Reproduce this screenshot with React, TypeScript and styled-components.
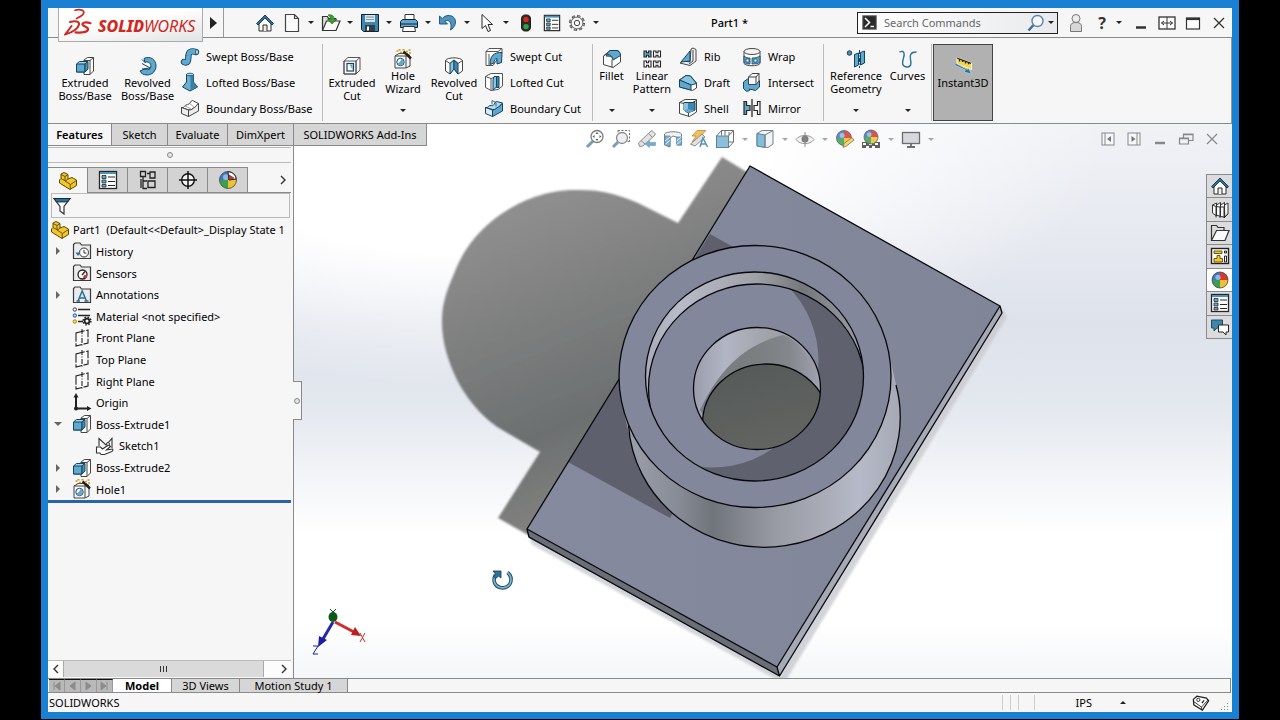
import React from "react";
import styled, { createGlobalStyle, css } from "styled-components";

const INK = "#262626";
const BLUE = "#5fa9d0";
const DEEP = "#2a7099";
const PANEL = "#f6f6f7";
const LINE = "#8a8a8a";

const GlobalStyle = createGlobalStyle`
  * { box-sizing: border-box; }
  body {
    margin: 0;
    background: #000;
    color: #000;
    font-family: "Noto Sans", "Open Sans", sans-serif;
    font-size: 11px;
    line-height: 13px;
  }
  button, input, select {
    font: inherit;
    color: inherit;
    border: 0;
    padding: 0;
    margin: 0;
    background: none;
  }
  ul { list-style: none; margin: 0; padding: 0; }
  svg { display: block; flex: none; }
`;

/* ---------- icons ---------- */

const ball = (cx: number, cy: number, r: number) => (
  <g>
    <path d={`M${cx} ${cy}L${cx - r} ${cy}A${r} ${r} 0 0 1 ${cx} ${cy - r}Z`} fill="#3a78c8" />
    <path d={`M${cx} ${cy}L${cx} ${cy - r}A${r} ${r} 0 0 1 ${cx + r} ${cy}Z`} fill="#d8372c" />
    <path d={`M${cx} ${cy}L${cx + r} ${cy}A${r} ${r} 0 0 1 ${cx} ${cy + r}Z`} fill="#f0c030" />
    <path d={`M${cx} ${cy}L${cx} ${cy + r}A${r} ${r} 0 0 1 ${cx - r} ${cy}Z`} fill="#3aa050" />
    <circle cx={cx - r / 4} cy={cy - r / 3} r={r / 3} fill="#fff" opacity=".45" />
    <circle cx={cx} cy={cy} r={r} fill="none" stroke="#444" strokeWidth=".8" />
  </g>
);

const wand = (
  <g>
    <path d="M10.500 2.500l7.500 7" stroke="#222" strokeWidth="2.400" />
    <path d="M3.500 2h2M7 3.500h2M5.500 .8h2M13 2.500h2M15.500 1h2M16 4h2M9.500 .8h2" stroke="#d99a1c" strokeWidth="1.400" />
  </g>
);

const folder = (
  <path d="M1.500 17.500V3.500l1.500-1.500h5l1.500 2h9v13.500z" fill="#e9ebec" stroke="#3a3a3a" strokeWidth="1.200" />
);

const icons: Record<string, React.ReactNode> = {
  home: (
    <>
      <path d="M4 10v8h12v-8L10 4z" fill="#fff" stroke={INK} />
      <path d="M8 18v-6h4v6" fill="#eee" stroke={INK} />
      <path d="M1.500 10.500L10 2l8.500 8.500-1.500 1.500-7-7-7 7z" fill={DEEP} stroke="#123" strokeWidth=".8" />
    </>
  ),
  page: <path d="M3.500 1.500h9l4 4v13h-13zM12.500 1.500v4h4" fill="#fbfbfb" stroke="#444" strokeWidth="1.200" />,
  open: (
    <>
      <path d="M1.500 17V3.500h5l1 2h7V8" fill="#ddd" stroke="#333" strokeWidth="1.200" />
      <path d="M1.500 17.500L5.500 8H19l-4 9.500z" fill="#fafafa" stroke="#333" strokeWidth="1.200" />
      <path d="M7 2c4-1 6 1 6 4h3l-5 5-4.500-5H9.500c0-2-1-3-2.500-4z" fill="#3f9b2f" stroke="#1f6a18" strokeWidth=".6" />
    </>
  ),
  save: (
    <>
      <path d="M1.500 1.500h17v17h-15l-2-2z" fill="#3f86ad" stroke="#123" />
      <path d="M5 2h10v7H5z" fill="#dbe4ea" />
      <path d="M6 4h8M6 6.500h8" stroke="#7893a5" strokeWidth=".9" />
      <path d="M5 12h10v6H5z" fill="#333f48" />
      <path d="M7 13.500h2v4H7z" fill="#fff" />
    </>
  ),
  print: (
    <>
      <path d="M6 7V1.500h9V7" fill="#fff" stroke="#333" />
      <path d="M1.500 8.500l2-2h13l2 2v6h-17z" fill={BLUE} stroke="#123" />
      <path d="M1.500 11h17" stroke="#123" />
      <path d="M4.500 13.500h11l1 5h-13z" fill="#fff" stroke="#333" />
    </>
  ),
  undo: (
    <path d="M1.500 3v8h8L6.800 8.200c4-2 7.700.5 5.700 8.800 8-5 6-15-2.500-14.500C7.500 2.700 5.500 4 4.300 5.500z" fill="#4f94be" stroke="#1a4f70" strokeWidth=".9" />
  ),
  cursor: <path d="M5 1.500v14l3.500-3 2.500 6 2.500-1-2.500-6h4.500z" fill="#fff" stroke={INK} />,
  light: (
    <>
      <rect x="5" y="1" width="10" height="18" rx="4.500" fill="#2b2b2b" stroke="#111" />
      <circle cx="10" cy="6" r="3" fill="#d6291e" />
      <circle cx="10" cy="14" r="3" fill="#2fa53a" />
    </>
  ),
  list: (
    <>
      <rect x="1.500" y="1.500" width="17" height="17" fill="#fff" stroke={INK} strokeWidth="1.300" />
      <path d="M2 3h16" stroke="#4a93bb" strokeWidth="2" />
      <path d="M4 5.500h4v3H4zM4 10h4v3H4zM4 14.500h4v2.500H4z" fill={BLUE} stroke={INK} strokeWidth=".8" />
      <path d="M10 7h7M10 11.500h7M10 15.500h7" stroke={INK} />
    </>
  ),
  gear: (
    <>
      <circle cx="10" cy="10" r="7.800" fill="none" stroke="#444" strokeWidth="2.200" strokeDasharray="3.500 2.626" />
      <circle cx="10" cy="10" r="7.600" fill="none" stroke="#f6f6f7" strokeWidth="1" strokeDasharray="1.700 4.268" strokeDashoffset="-.9" />
      <circle cx="10" cy="10" r="6.600" fill="#f6f6f7" stroke="#444" strokeWidth=".9" />
      <circle cx="10" cy="10" r="3" fill="#fff" stroke="#444" strokeWidth="1.100" />
    </>
  ),
  user: (
    <>
      <path d="M4.500 18.500v-5c0-3 2-4 5.500-4s5.500 1 5.500 4v5z" fill="#d8d8d8" stroke="#777" />
      <circle cx="10" cy="5.500" r="4" fill="#ececec" stroke="#777" />
    </>
  ),
  minimize: <path d="M5 14.500h10" stroke="#333" strokeWidth="2.500" />,
  span: (
    <>
      <rect x="2" y="4" width="16" height="12" fill="#fff" stroke="#333" strokeWidth="1.300" />
      <path d="M10 4v12M4.500 10h11M7 8l-2.500 2L7 12M13 8l2.500 2L13 12" fill="none" stroke="#333" />
    </>
  ),
  maximize: (
    <>
      <rect x="3.500" y="5" width="13" height="11" fill="#fff" stroke="#333" strokeWidth="1.200" />
      <path d="M3.500 6h13" stroke="#333" strokeWidth="2.200" />
    </>
  ),
  close: <path d="M5 5l10 10M15 5L5 15" stroke="#333" strokeWidth="1.300" />,
  boss: (
    <>
      <path d="M9 4l3.500-2.500h6V15L15 18.500H9z" fill="#fff" stroke="#444" />
      <path d="M15 4.500v14M15 4.500l3.500-3M15 4.500H9" fill="none" stroke="#444" />
      <path d="M1.500 8l3-2.500H13L10 8v8H1.500z" fill="#a3d0e8" stroke="#14455f" />
      <path d="M10 8h-8.500v8H10z" fill={BLUE} stroke="#14455f" />
      <path d="M10 8l3-2.500V13l-3 3z" fill="#468fb8" stroke="#14455f" />
    </>
  ),
  revolve: (
    <>
      <path d="M6 2.500c6-3 12 1 12 7.500 0 5-4 9-9 9-3 0-6-1.500-7-4l5-2c4 2 7-1 5.500-4.500C11.500 5.500 8 5.500 7 6.500z" fill={BLUE} stroke="#14455f" />
      <path d="M4 7.500l8 4.500-8 1M7 6.500L4 3.500" fill="none" stroke="#14455f" />
    </>
  ),
  swept: (
    <>
      <path d="M4 15C9 17 8 12 8.500 8.500 9 3.500 13 4 16 5" fill="none" stroke="#14455f" strokeWidth="6.400" strokeLinecap="round" />
      <path d="M4 15C9 17 8 12 8.500 8.500 9 3.500 13 4 16 5" fill="none" stroke={BLUE} strokeWidth="4.600" strokeLinecap="round" />
      <ellipse cx="17" cy="5" rx="1.500" ry="2.500" fill="#b5dbef" stroke="#14455f" strokeWidth=".8" />
    </>
  ),
  lofted: (
    <>
      <path d="M6.500 2.500h7V10l4 5-7.500 4-7.500-4 4-5z" fill="#6aaed2" stroke="#14455f" />
      <path d="M10.500 4v14.500l7-3.500-4-5V3z" fill="#3a7fa6" />
      <ellipse cx="10" cy="2.500" rx="3.500" ry="1.300" fill="#a8d4ea" stroke="#14455f" strokeWidth=".8" />
    </>
  ),
  boundary: (
    <>
      <path d="M1.500 9.500c3 1 3-3 6-3s3-4 5-4l6 3c-2 1-2 3-4 4s-3 3-6 2.500z" fill="#fff" stroke="#444" />
      <path d="M1.500 9.500v6l7 3v-6.500zM8.500 12v6.500l10-5.500V5.500c-2 1-2 3-4 4s-3 3-6 2.500z" fill="#eceded" stroke="#444" />
      <path d="M5 8l6 3M9 5l5 4" stroke="#777" strokeWidth=".7" />
    </>
  ),
  cutExtrude: (
    <>
      <path d="M2 5l4-3.500h12V14l-4 4H2z" fill="#fff" stroke="#555" />
      <path d="M14 5H2v13h12zM14 5l4-3.500M14 18V5" fill="none" stroke="#555" />
      <rect x="5" y="7.500" width="6.500" height="7.500" fill="#fff" stroke="#14455f" strokeWidth="1.200" />
      <path d="M7.500 8.500h3.200v5.500z" fill={BLUE} />
    </>
  ),
  hole: (
    <>
      <path d="M2 7l4-2.500h8l3 2.500V17l-4 2H2z" fill="#f7f7f7" stroke="#444" />
      <path d="M2 7h11v12M13 7l4-1" fill="none" stroke="#444" />
      <circle cx="7.500" cy="13" r="3.700" fill="#fff" stroke="#14455f" />
      <path d="M4.500 14.500c2-1 3-2 4-4.500 3 1.500 2.500 5-.5 6.500-2 .3-3-.7-3.500-2z" fill={BLUE} />
      {wand}
    </>
  ),
  cutRevolve: (
    <>
      <path d="M1.500 4.500C3 1 17 1 18.500 4.500V15L14 18l-4-5.500L6 18l-4.500-3z" fill="#fff" stroke="#444" />
      <path d="M1.500 4.500L6 7.500l4-3.500 4 3.500 4.500-3" fill="none" stroke="#444" />
      <path d="M10 4v9l-4 5V7.500z" fill="#8cc3e0" stroke="#14455f" />
      <path d="M10 4v9l4 5V7.500z" fill="#3f87b0" stroke="#14455f" />
    </>
  ),
  cutSwept: (
    <>
      <path d="M2 4.500l3-3h13v4L9 18.500H2z" fill="#fff" stroke="#555" />
      <path d="M2 4.500h12l4-3M5 18V7" fill="none" stroke="#555" />
      <path d="M18 5.500C10 5 6 9 6 17.500l4-1.500c0-3 1-4 3-4.500V17l4.500-1.500z" fill={BLUE} stroke="#14455f" />
    </>
  ),
  cutLofted: (
    <>
      <path d="M1.500 4.500L7 1.500h11.500V14L14 17.500 7 18.500l-5.500-3z" fill="#fff" stroke="#555" />
      <path d="M1.500 4.500L7 6.500v12M7 6.500l3-1" fill="none" stroke="#555" />
      <path d="M10 4.500h2.500V15L9 18V8z" fill="#8cc3e0" stroke="#14455f" />
      <path d="M12.500 4.500H15v11h-2.500z" fill="#3f87b0" stroke="#14455f" />
    </>
  ),
  cutBoundary: (
    <>
      <path d="M1.500 9.500c3 1 3-3 6-2s3-4 5-4l6 1.500c-2 1-2 3-4 4s-3 3-6 2.500z" fill="#b5dbef" stroke="#14455f" />
      <path d="M1.500 9.500v6l7 3v-6.500z" fill="#dcebf3" stroke="#14455f" />
      <path d="M8.500 12v6.500l10-5.500V5.500c-2 1-2 3-4 3.500s-3 3-6 3z" fill={BLUE} stroke="#14455f" />
      <path d="M8 6.500V2.500l4 2v4" fill="none" stroke="#14455f" strokeWidth=".8" />
    </>
  ),
  fillet: (
    <>
      <path d="M1.500 7L8 1.500h8l2.500 4V13L11 18.500l-9.500-3z" fill="#fff" stroke="#444" />
      <path d="M10 10.500v8" stroke="#444" />
      <path d="M5.500 4L8 1.500h6c3 0 4.500 2 4.500 5L11 11c0-2-1-4-7-4z" fill={BLUE} stroke="#14455f" />
      <path d="M1.500 7l2.500-2c5 .5 6.500 2.500 6.500 5.500" fill="none" stroke="#444" />
    </>
  ),
  pattern: (
    <>
      <path d="M2 2h2.500v1.800h2V2H9v6H6.500V6.200h-2V8H2z" fill={BLUE} stroke={INK} strokeWidth="1.100" />
      <path d="M11.500 2H14v1.800h2V2h2.500v6H16V6.200h-2V8h-2.500zM2 12h2.500v1.800h2V12H9v6H6.500v-1.800h-2V18H2zM11.500 12H14v1.800h2V12h2.500v6H16v-1.800h-2V18h-2.500z" fill="#fff" stroke={INK} strokeWidth="1.100" />
    </>
  ),
  rib: (
    <>
      <path d="M13 2l2-1 3 1.500V14l-6 4.500L2 16l3-2 7 1z" fill="#f4f4f4" stroke="#444" />
      <path d="M15 3v11l-4 3" fill="none" stroke="#444" />
      <path d="M12 4v10l-9 1z" fill={BLUE} stroke="#14455f" />
    </>
  ),
  draft: (
    <>
      <path d="M1.500 8L8 3.500l4.500.5 6 7V16l-4 2.500L1.500 15z" fill="#fff" stroke="#444" />
      <path d="M1.500 8L8 3.500l4.500.5 6 7.500L13 13z" fill="#8cc3e0" stroke="#14455f" />
      <path d="M1.500 8L13 13v5L1.500 15z" fill={BLUE} stroke="#14455f" />
    </>
  ),
  shell: (
    <>
      <path d="M1.500 4.500L7 1.500h11.500V14l-7 4.500-10-3z" fill="#fff" stroke="#444" />
      <path d="M1.500 4.500l9 2v12M10.500 6.500l8-4" fill="none" stroke="#444" />
      <path d="M6 4.500h11V12l-7 3-4-3z" fill="#3f87b0" stroke="#14455f" />
      <path d="M10 5v6l-4 2V5z" fill="#8cc3e0" />
      <path d="M10 11l6 1.500-5 2.500-5-2z" fill={BLUE} />
    </>
  ),
  wrap: (
    <>
      <path d="M2 4.500v12c2 3 14 3 16 0v-12" fill="#fff" stroke="#444" />
      <ellipse cx="10" cy="4.500" rx="8" ry="3" fill="#f4f4f4" stroke="#444" />
      <path d="M2 9c2 1.500 3.500 2 6 2v6c-3 0-4-.5-6-1.500zM10 11c4 0 6-1 8-2v6.500c-2 1-4 1.500-8 1.500z" fill={BLUE} stroke="#14455f" strokeWidth=".8" />
      <path d="M4 12v3h3v-3zM12 12v3h3v-3z" fill="#fff" stroke="#14455f" strokeWidth=".8" />
    </>
  ),
  intersect: (
    <>
      <path d="M1.500 10l4-3h10l2 2V15l-4 3.500-6-1.500v1.500l-3 1-3-3z" fill={BLUE} stroke="#14455f" />
      <path d="M6.500 5l3.500-3.500h7V9L14 12.500H6.500z" fill="#f7f7f7" stroke="#444" />
      <path d="M6.500 5H14v7.500M14 5l3-3.500" fill="none" stroke="#444" />
    </>
  ),
  mirror: (
    <>
      <path d="M2 3.500h2.500v4H8v5H4.500v4H2z" fill={BLUE} stroke={INK} strokeWidth="1.200" />
      <path d="M18 3.500h-2.500v4H12v5h3.500v4H18z" fill="#fff" stroke={INK} strokeWidth="1.200" />
      <path d="M10 1v18" stroke={INK} strokeWidth="1.300" />
    </>
  ),
  refGeo: (
    <>
      <circle cx="3.500" cy="4" r="2.300" fill="#468fb8" stroke="#123" strokeWidth=".8" />
      <path d="M8.500 5.500l4-1.500v12l-4 2zM14.500 3.500l4-1.500v12l-4 2z" fill={BLUE} stroke="#14455f" />
      <path d="M13.500 1v18" stroke="#14455f" strokeDasharray="4 1.500 1 1.500" />
    </>
  ),
  curves: (
    <path d="M1.500 3C6 1 7 4 5.500 9S4 17.500 8.500 18s5-3 4-7.500S12.500 3 18.500 3" fill="none" stroke={DEEP} strokeWidth="1.400" />
  ),
  instant: (
    <>
      <path d="M4 1.500L18.500 7v6.500L4 8z" fill="#f6d64a" stroke="#fff8c8" />
      <path d="M4 2l14 5.300M6.500 3v2.500M9.500 4v2M12.500 5v2.500M15.500 6.300v2" stroke={INK} strokeWidth="1.300" />
      <path d="M1.500 9l11 5-1.500 2 7.500 2-3-5.500-1.200 1L3 7.500z" fill={DEEP} stroke="#bfe0f2" strokeWidth=".6" />
    </>
  ),
  zoomFit: (
    <>
      <path d="M2 18l6-6" stroke="#5a8fb0" strokeWidth="3" />
      <circle cx="12" cy="7.500" r="6" fill="#fff" stroke="#666" strokeWidth="1.300" />
      <path d="M12 3l1.500 2h-3zM12 12l1.500-2h-3zM7.500 7.500l2-1.500v3zM16.500 7.500l-2-1.500v3z" fill="#444" />
    </>
  ),
  zoomArea: (
    <>
      <path d="M7 1.500h11.500v11M18.500 12.500h-3M7 1.500v3" fill="none" stroke="#555" strokeDasharray="2 1.500" />
      <path d="M2 18l5-5" stroke="#5a8fb0" strokeWidth="3" />
      <circle cx="11" cy="9" r="5.500" fill="#e9eef2" stroke="#777" strokeWidth="1.300" />
    </>
  ),
  prevView: (
    <>
      <path d="M1.500 14L13 3l2-1.500 3.500 3.500L17 7 6 17l-3.500.5z" fill="#ddd" stroke="#777" />
      <path d="M4 11.500L8 15M11.500 4.500l4 4" stroke="#777" />
      <path d="M18.500 13.500h-6v-2l-4.500 3.500 4.500 3.500v-2h6z" fill="#5aa0c4" stroke="#5b8aa3" strokeWidth=".6" />
    </>
  ),
  section: (
    <>
      <path d="M1.500 5c2-3 15-3 17 0v11h-4V8.500L10 7 7 9v9l-5.500-2z" fill="#f2f2f2" stroke="#666" />
      <path d="M2 7h5v10.500L2 15.500zM13.500 8h5v8h-5z" fill={BLUE} stroke="#3d7391" strokeWidth=".8" />
      <path d="M2 12l5-4M2 15.500l5-4M13.500 12l5-4M13.500 15.500l5-4" stroke="#fff" strokeWidth=".8" />
    </>
  ),
  annView: (
    <>
      <path d="M8 1.500h9l-5 5h3L3 13l4-6H3z" fill="#f2b63c" stroke="#a87a20" strokeWidth=".8" />
      <path d="M1.500 15L13 5l3 3L6 17z" fill="#ddd" stroke="#777" />
      <path d="M11 18l3-9 4.500 9M12 15h5" fill="none" stroke="#3a7fa8" strokeWidth="1.500" />
    </>
  ),
  orient: (
    <>
      <path d="M1.500 7l5-5.500h12V13l-5 5.500" fill="#fff" stroke="#555" />
      <path d="M13.500 7l5-5.500M6.500 1.500v5M18 13h-4M10 1.500v5M14 3v3" stroke="#555" />
      <rect x="1.500" y="7" width="12" height="11.500" fill="#7ab4d2" stroke="#3d6f8c" />
    </>
  ),
  display: (
    <>
      <path d="M2 4.500l5-3h11V15l-5 3.500L2 17z" fill="#eef3f6" stroke="#666" />
      <path d="M2 4.500L10 6v12.500L2 17z" fill="#6fb2d4" stroke="#3d6f8c" />
      <path d="M10 6l8-4.500M10 6v12" stroke="#666" />
    </>
  ),
  eye: (
    <>
      <path d="M1 10.500C5 5 15 5 19 10.500 15 16 5 16 1 10.500z" fill="#eef0f2" stroke="#888" />
      <circle cx="10" cy="10" r="3.500" fill="#666" />
      <path d="M10 3v15" stroke="#777" />
    </>
  ),
  appearance: (
    <>
      {ball(9, 9, 7.500)}
      <path d="M8 18.500l1-4 8-6 2 2.500-7.500 6z" fill="#f0d060" stroke="#6b5a20" strokeWidth=".8" />
    </>
  ),
  scene: (
    <>
      <path d="M1 13h18v6H1z" fill="#444" />
      <path d="M2 14h3v2H2zM8 14h3v2H8zM14 14h3v2h-3zM5 17h3v2H5zM11 17h3v2h-3z" fill="#fff" />
      {ball(10, 8, 7)}
    </>
  ),
  monitor: (
    <>
      <rect x="1.500" y="3.500" width="17" height="11" fill="#cfd3d8" stroke="#555" strokeWidth="1.300" />
      <path d="M10 14.500v2.500M6 18h8" stroke="#555" strokeWidth="1.800" />
    </>
  ),
  paneLeft: (
    <>
      <rect x="4" y="4" width="12" height="12" fill="#f6f7f9" stroke="#888" />
      <path d="M7 4v12" stroke="#888" />
      <path d="M13 7v6l-4-3z" fill="#777" />
    </>
  ),
  paneRight: (
    <>
      <rect x="4" y="4" width="12" height="12" fill="#f6f7f9" stroke="#888" />
      <path d="M13 4v12" stroke="#888" />
      <path d="M7.500 7v6l4-3z" fill="#777" />
    </>
  ),
  miniMin: <path d="M5 14h10" stroke="#888" strokeWidth="2.500" />,
  miniRestore: (
    <path d="M7.500 9V5h9.500v6.500h-4M3.500 9h9v6h-9zM3.500 9.600h9M7.500 5.600h9" fill="none" stroke="#888" strokeWidth="1.200" />
  ),
  miniClose: <path d="M5 5l10 10M15 5L5 15" stroke="#888" strokeWidth="1.200" />,
  part: (
    <>
      <path d="M1.500 9l1.500-1.500V3l3-1.500L10 3.500V8l4-1.500L18.500 9v5.500L12 18.500 1.500 12z" fill="#f3c62c" stroke="#5e4a08" />
      <path d="M3 7.500L7.500 10l2.500-2M3 3.500L7 5.500l3-2M7 5.500v4.500l5.500 3.500 6-4M12.200 13.500v5" fill="none" stroke="#5e4a08" strokeWidth=".9" />
    </>
  ),
  config: (
    <path d="M2.500 1.500h5v5h-5zM5 6.500v12h4M5 11h4M9 3.500h3M12 2h5v6h-5zM10 11h7v6.500h-7zM3 9v9" fill="none" stroke="#222" strokeWidth="1.300" />
  ),
  target: (
    <>
      <circle cx="10" cy="10" r="6.300" fill="#f4f4f4" stroke="#111" strokeWidth="1.400" />
      <path d="M10 1v18M1 10h18" stroke="#111" strokeWidth="1.500" />
    </>
  ),
  globe: (
    <>
      {ball(10, 10, 8.500)}
      <path d="M10 1.800C14.500 2 18 5 18 9l-7 1z" fill="#fff" stroke="#222" />
      <path d="M11 5l5 3-5 2z" fill="#d8372c" stroke="#333" strokeWidth=".6" />
    </>
  ),
  filter: (
    <>
      <path d="M2 2.500h16l-6 8V18l-4-3v-4.500z" fill="#fff" stroke="#333" strokeWidth="1.200" />
      <path d="M2 2.500h16L15.500 6h-11z" fill={DEEP} stroke="#123" strokeWidth=".8" />
    </>
  ),
  history: (
    <>
      {folder}
      <circle cx="12" cy="11.500" r="4.500" fill="#fff" stroke="#333" />
      <path d="M12 9v3h2.500" fill="none" stroke="#333" />
      <path d="M3.500 11.500h5L6 15z" fill={DEEP} />
    </>
  ),
  sensors: (
    <>
      {folder}
      <circle cx="10.500" cy="11.500" r="4.500" fill="#fff" stroke="#222" strokeWidth="1.300" />
      <path d="M10 12l3-3.500" stroke="#222" strokeWidth="1.300" />
      <path d="M12 12h3v3h-4z" fill="#d33" />
    </>
  ),
  annotations: (
    <>
      {folder}
      <path d="M6 16l4.200-10L14.500 16M7.500 13h5.500M4.500 16H8M12.500 16h4" fill="none" stroke={DEEP} strokeWidth="1.500" />
    </>
  ),
  material: (
    <>
      <path d="M6 3.500h12M6 9.500h12M6 15.500h5" stroke="#222" strokeWidth="1.600" />
      <circle cx="2.800" cy="3.500" r="1.700" fill="#fff" stroke="#333" />
      <circle cx="2.800" cy="9.500" r="1.700" fill="#9cf" stroke="#25c" />
      <circle cx="2.800" cy="15.500" r="1.700" fill="#fd4" stroke="#a80" />
      <circle cx="15" cy="15" r="2.400" fill="#fff" stroke="#222" strokeWidth="1.800" />
      <circle cx="15" cy="15" r="3.900" stroke="#222" strokeWidth="1.400" strokeDasharray="1.600 1.463" />
    </>
  ),
  plane: (
    <>
      <path d="M4 5l12-3v13L4 18z" fill="#fbfbfb" stroke="#222" strokeDasharray="9 1.500" strokeWidth="1.100" />
      <path d="M10 1v18" stroke="#222" strokeDasharray="5 1.500 1 1.500" strokeWidth="1.100" />
    </>
  ),
  origin: (
    <>
      <path d="M4 3v12.500h13" fill="none" stroke="#222" strokeWidth="2" />
      <path d="M4 0l2.500 4.500h-5zM19.500 15.500L15 13v5z" fill="#222" />
      <circle cx="4" cy="15.500" r="2" fill="#222" />
    </>
  ),
  sketch: (
    <>
      <path d="M4 10V2.500L11 9l6-6.500V12" fill="none" stroke="#333" strokeWidth="1.100" />
      <path d="M1.500 11h4l2 2 6-4 2 1.500-4 3.500 6-1c1 1 0 2.500-2 3l-6 2.500H6l-1-1.500H1.500z" fill="#fff" stroke="#333" strokeWidth="1.100" />
      <circle cx="13" cy="8" r="1.500" fill="#fff" stroke="#333" />
    </>
  ),
  library: (
    <path d="M2.500 5l4-2v13l-4-3zM6.500 5l4-2.500v14l-4-1.500M10.500 5l4-2.500v14.500l-4-.5M14.500 5l3.500-2v11l-3.500 3M2.500 5L6 6.500v11M6 6.500l4 .5v11M10 7h4v11l4-4" fill="#f7f7f7" stroke="#222" strokeWidth=".9" />
  ),
  explorer: (
    <>
      <path d="M1.500 17V2.500h5l1.500 2h6V8" fill="#ddd" stroke="#333" strokeWidth="1.200" />
      <path d="M1.500 17.500L6.500 7.500H19l-4 10z" fill="#fafafa" stroke="#333" strokeWidth="1.200" />
    </>
  ),
  palette: (
    <>
      <rect x="1.500" y="2.500" width="17" height="15" fill="#fff" stroke="#222" strokeWidth="1.400" />
      <path d="M4 5h8v2.500H4zM7 9.500h3v3h2.500V16H4v-3.500h3z" fill="#f3c62c" stroke="#5e4a08" strokeWidth=".9" />
      <path d="M14.500 5h2v2h-2zM14.500 10h2v6h-2z" fill="#fff" stroke="#222" />
    </>
  ),
  sphere: ball(10, 10, 8),
  forum: (
    <>
      <path d="M1.500 3h11v8H7l-3 3v-3H1.500z" fill="#3f87a8" stroke="#1a4f66" />
      <path d="M8.500 8h10v7H16v3l-3-3H8.500z" fill="#fff" stroke="#222" />
    </>
  ),
  tag: (
    <>
      <path d="M1.500 6l4-3.500L16 4.500l2.500 3-7 10.500L2 12z" fill="#fff" stroke="#222" strokeWidth="1.400" />
      <path d="M10.500 14.500l7.500-8M10.500 14.500L2 8.500M10.500 14.500l.5 3.500" fill="none" stroke="#222" />
      <circle cx="7" cy="6.500" r="1.800" fill="none" stroke="#222" />
      <path d="M11 10l2.500-3" stroke="#222" strokeWidth="1.400" />
    </>
  ),
};

const Icon = ({ name, size = 20 }: { name: string; size?: number }) => (
  <svg width={size} height={size} viewBox="0 0 20 20" fill="none" aria-hidden="true">
    {icons[name]}
  </svg>
);

/* ---------- shell ---------- */

const Desktop = styled.div`
  display: flex;
  min-height: 100vh;
  padding: 0 41px 1px;
  background: #000;
`;

const AppWindow = styled.div`
  flex: 1;
  min-width: 0;
  display: flex;
  flex-direction: column;
  border: solid #1a80d2;
  border-width: 8px 7px 7px;
  background: ${PANEL};
`;

const TitleBar = styled.header`
  display: flex;
  align-items: center;
  height: 30px;
  border-bottom: 1px solid ${LINE};
`;

const Brand = styled.div`
  position: relative;
  align-self: flex-start;
  display: flex;
  gap: 5px;
  flex: none;
  width: 145px;
  height: 34px;
  margin-left: 10px;
  padding-left: 5px;
  border: 1px solid #aaa;
  border-top: 0;
  background: linear-gradient(170deg, #fff 40%, #e2e3e4);
  color: #d0281e;
`;

const BrandText = styled.span`
  padding-top: 7px;
  font-style: italic;
  font-size: 16px;
  line-height: 22px;
  b { font-weight: 800; }
`;

const Expander = styled.button`
  width: 21px;
  align-self: stretch;
  display: grid;
  place-items: center;
  border-right: 1px solid #999;
  margin-right: 28px;
`;

const Cell = styled.button<{ $w: number }>`
  flex: none;
  width: ${(p) => p.$w}px;
  height: 22px;
  display: grid;
  place-items: center;
  font-size: 16px;
  font-weight: 700;
  line-height: 22px;
  color: #333;
`;

const Caret = styled.i<{ $light?: boolean; $up?: boolean }>`
  width: 0;
  height: 0;
  border: solid transparent;
  border-width: 0 3px;
  ${(p) =>
    p.$up
      ? css`border-bottom: 3px solid #222;`
      : css`border-top: 3px solid ${p.$light ? "#999" : "#222"};`}
`;

const DocTitle = styled.h1`
  flex: 1;
  margin: 0;
  text-align: center;
  font-size: 11px;
  line-height: 16px;
  font-weight: 500;
`;

const Search = styled.label`
  flex: none;
  display: flex;
  align-items: center;
  width: 201px;
  height: 22px;
  border: 1px solid #222;
  background: linear-gradient(90deg, #fff, #e9eaed);
  padding-left: 4px;
  input {
    flex: 1;
    min-width: 0;
    margin-left: 7px;
    outline: 0;
    font-size: 11px;
    &::placeholder { color: #666; opacity: 1; }
  }
`;

/* ---------- ribbon ---------- */

const Ribbon = styled.nav`
  display: flex;
  height: 86px;
  padding: 6px 0 2px 6px;
  border-bottom: 1px solid ${LINE};
  border-right: 1px solid #999;
`;

const Big = styled.button<{ $w: number; $top?: boolean; $on?: boolean }>`
  flex: none;
  width: ${(p) => p.$w}px;
  display: flex;
  flex-direction: column;
  align-items: center;
  padding-top: ${(p) => (p.$top ? 5 : 12)}px;
  line-height: 13px;
  white-space: pre;
  ${(p) => p.$on && css`background: #b1b1b1; border: 1px solid #444; padding-top: 11px;`}
  ${Caret} { margin-top: auto; margin-bottom: 9px; }
`;

const Stack = styled.div<{ $w: number; $lead: number }>`
  flex: none;
  width: ${(p) => p.$w}px;
  margin-left: ${(p) => p.$lead}px;
  display: grid;
  grid-template-rows: repeat(3, 1fr);
`;

const Small = styled.button`
  display: flex;
  align-items: center;
  gap: 6px;
  white-space: nowrap;
  text-align: left;
`;

const Rule = styled.span<{ $gap: number }>`
  flex: none;
  width: 1px;
  margin-right: ${(p) => p.$gap}px;
  background: #bbb;
`;

/* ---------- workspace ---------- */

const Workspace = styled.main`
  flex: 1;
  min-height: 0;
  display: flex;
  flex-direction: column;
  background:
    radial-gradient(ellipse 620px 240px at 37% 4%, #fff 45%, rgba(255, 255, 255, 0)),
    linear-gradient(#f0f2f6, #dee2eb 36%, #e3e7ee 50%, #fff 74%, #fff 90%, #f4f6f8);
`;

const TopRow = styled.div`
  position: relative;
  z-index: 1;
  display: flex;
  align-items: flex-start;
  height: 22px;
`;

const CommandTab = styled.button<{ $w: number; $on?: boolean }>`
  flex: none;
  width: ${(p) => p.$w}px;
  height: 22px;
  border: solid ${LINE};
  border-width: 0 1px 1px 0;
  background: ${(p) => (p.$on ? PANEL : "#d6d6d6")};
  font-weight: ${(p) => (p.$on ? 600 : 400)};
`;

const HeadsUp = styled.div`
  display: flex;
  align-items: center;
  margin-left: 155px;
  padding-top: 4px;
  opacity: 0.85;
`;

const DocControls = styled.div`
  display: flex;
  margin-left: auto;
  padding: 4px 7px 0 0;
`;

const Body = styled.div`
  position: relative;
  flex: 1;
  display: flex;
`;

const FeaturePanel = styled.aside`
  position: relative;
  flex: none;
  width: 246px;
  display: flex;
  flex-direction: column;
  padding-right: 2px;
  border-right: 1px solid ${LINE};
  background: ${PANEL};
`;

const Grip = styled.div`
  height: 16px;
  border: solid #bbb;
  border-width: 1px 0;
  margin-top: 1px;
  display: grid;
  place-items: center;
`;

const Dot = styled.i`
  width: 6px;
  height: 6px;
  border: 1px solid #888;
  border-radius: 50%;
  background: #e6e6e6;
`;

const PanelTabs = styled.div`
  display: flex;
  margin-top: 4px;
  height: 26px;
`;

const PanelTab = styled.button<{ $on?: boolean }>`
  flex: none;
  width: 40px;
  display: grid;
  place-items: center;
  border: solid ${LINE};
  border-width: 1px 1px ${(p) => (p.$on ? 0 : 1)}px 0;
  background: ${(p) => (p.$on ? PANEL : "#d3d3d3")};
`;

const MoreTabs = styled.button`
  flex: 1;
  display: flex;
  align-items: center;
  justify-content: flex-end;
  padding-right: 4px;
  border-bottom: 1px solid ${LINE};
`;

const FilterBox = styled.label`
  display: flex;
  align-items: center;
  height: 25px;
  margin: 0 1px 1px 3px;
  border: 1px solid #bbb;
  input { flex: 1; min-width: 0; outline: 0; }
`;

const Tree = styled.ul`
  display: grid;
  grid-auto-rows: 1fr;
  height: 284px;
  overflow: hidden;
  border-bottom: 3px solid #2b62ab;
`;

const Node = styled.li<{ $depth: number }>`
  display: flex;
  align-items: center;
  gap: ${(p) => (p.$depth === 0 ? 3 : 4)}px;
  padding-left: ${(p) => [2, 4, 47][p.$depth]}px;
  white-space: pre;
`;

const Toggle = styled.button`
  width: 12px;
  height: 12px;
  margin-right: 4px;
  display: grid;
  place-items: center;
`;

const ScrollBar = styled.div`
  display: flex;
  height: 17px;
  margin-top: auto;
  margin-bottom: 1px;
  border-top: 1px solid #bbb;
  background: #fcfcfc;
`;

const ScrollButton = styled.button`
  width: 15px;
  display: grid;
  place-items: center;
`;

const Thumb = styled.div`
  flex: 1;
  display: flex;
  align-items: center;
  justify-content: center;
  gap: 2px;
  margin-right: 12px;
  border: solid #aaa;
  border-width: 0 1px;
  background: #dadada;
  i { width: 1px; height: 6px; background: #333; }
`;

const Splitter = styled.div`
  position: absolute;
  left: 245px;
  top: 235px;
  width: 9px;
  height: 39px;
  border: 1px solid ${LINE};
  border-left: 0;
  background: ${PANEL};
  display: grid;
  place-items: center;
`;

const Viewport = styled.section`
  position: relative;
  flex: 1;
  min-width: 0;
  min-height: 532px;
  > svg { position: absolute; inset: 0; width: 100%; height: 100%; }
`;

const TaskPane = styled.div`
  position: absolute;
  right: 0;
  top: 28px;
  width: 26px;
  height: 165px;
  display: grid;
  grid-auto-rows: 1fr;
  border: solid ${LINE};
  border-width: 1px 0 0 1px;
`;

const TaskTab = styled.button<{ $on?: boolean }>`
  display: grid;
  place-items: center;
  border-bottom: 1px solid ${LINE};
  background: ${(p) => (p.$on ? "#fff" : "#dcdcde")};
`;

/* ---------- bottom ---------- */

const SheetBar = styled.div`
  display: flex;
  height: 15px;
  margin-right: 1px;
  padding-left: 1px;
  border: solid ${LINE};
  border-width: 1px 1px 1px 0;
`;

const SheetNav = styled.button`
  width: 16px;
  display: grid;
  place-items: center;
  background: #b9b9b9;
  border: solid #999;
  border-width: 1px 1px 0 0;
  border-top-color: #111;
`;

const SheetTab = styled.button<{ $w: number; $on?: boolean }>`
  width: ${(p) => p.$w}px;
  line-height: 12px;
  border-right: 1px solid ${LINE};
  background: ${(p) => (p.$on ? "#fff" : "#d6d6d6")};
  font-weight: ${(p) => (p.$on ? 700 : 400)};
`;

const StatusBar = styled.footer`
  display: flex;
  align-items: center;
  height: 19px;
  padding: 0 3px 0 1px;
`;

const StatusText = styled.span`
  margin-right: auto;
`;

const Divider = styled.i<{ $gap: number }>`
  width: 1px;
  height: 15px;
  margin-right: ${(p) => p.$gap}px;
  background: #ccc;
`;

const Units = styled.button`
  display: flex;
  align-items: center;
  gap: 28px;
  margin: 0 66px 0 41px;
`;

const Corner = styled.div`
  margin-left: 9px;
  align-self: flex-end;
`;

/* ---------- content ---------- */

const tree: { label: string; icon: string; depth: number; open?: boolean }[] = [
  { label: "Part1  (Default<<Default>_Display State 1", icon: "part", depth: 0 },
  { label: "History", icon: "history", depth: 1, open: false },
  { label: "Sensors", icon: "sensors", depth: 1 },
  { label: "Annotations", icon: "annotations", depth: 1, open: false },
  { label: "Material <not specified>", icon: "material", depth: 1 },
  { label: "Front Plane", icon: "plane", depth: 1 },
  { label: "Top Plane", icon: "plane", depth: 1 },
  { label: "Right Plane", icon: "plane", depth: 1 },
  { label: "Origin", icon: "origin", depth: 1 },
  { label: "Boss-Extrude1", icon: "boss", depth: 1, open: true },
  { label: "Sketch1", icon: "sketch", depth: 2 },
  { label: "Boss-Extrude2", icon: "boss", depth: 1, open: false },
  { label: "Hole1", icon: "hole", depth: 1, open: false },
];

const BigTool = ({ label, icon, w, menu, on }: { label: string; icon: string; w: number; menu?: boolean; on?: boolean }) => (
  <Big $w={w} $top={menu} $on={on}>
    <Icon name={icon} />
    {label}
    {menu && <Caret />}
  </Big>
);

const SmallTools = ({ w, lead = 0, items }: { w: number; lead?: number; items: [string, string][] }) => (
  <Stack $w={w} $lead={lead}>
    {items.map(([label, icon]) => (
      <Small key={label}>
        <Icon name={icon} />
        {label}
      </Small>
    ))}
  </Stack>
);

const Logo = () => (
  <svg width="29" height="28" viewBox="0 0 29 28" fill="none" stroke="#d0281e" strokeLinecap="round">
    <path d="M11 2.200C15 1 19.500 1.800 19.800 4S16 9 12.500 10.500" strokeWidth="1.700" />
    <path d="M6 14c5-1.300 9.500-.8 9 2.500S9 24.500 1.500 26.200L7.500 18" strokeWidth="2" />
    <path d="M26.500 15.200c-4.500-1.600-8.500-.7-8 1.300s6 2.500 5.500 5-6 3.700-12.500 2.800" strokeWidth="2.200" />
  </svg>
);

const EDGE = "#08080c";

const Model = () => (
  <svg viewBox="294 146 938 532" preserveAspectRatio="xMidYMid slice" role="img" aria-label="Flanged boss with counterbored hole">
    <defs>
      <linearGradient id="ground" x1="0" y1="0" x2=".35" y2="1">
        <stop offset="0" stopColor="#999998" />
        <stop offset=".35" stopColor="#858685" />
        <stop offset=".75" stopColor="#6c7070" />
        <stop offset="1" stopColor="#858582" />
      </linearGradient>
      <linearGradient id="plate" x1="0" y1="0" x2="1" y2="0">
        <stop offset="0" stopColor="#868a9e" />
        <stop offset="1" stopColor="#808598" />
      </linearGradient>
      <linearGradient id="side" gradientUnits="userSpaceOnUse" x1="624" y1="430" x2="900" y2="430">
        <stop offset="0" stopColor="#9da1ac" />
        <stop offset=".2" stopColor="#878b95" />
        <stop offset=".32" stopColor="#70747b" />
        <stop offset=".55" stopColor="#989ba3" />
        <stop offset=".85" stopColor="#b6b9c7" />
        <stop offset="1" stopColor="#a6a9b5" />
      </linearGradient>
      <linearGradient id="bore" gradientUnits="userSpaceOnUse" x1="646" y1="0" x2="864" y2="0">
        <stop offset="0" stopColor="#a8acba" />
        <stop offset=".15" stopColor="#b8bbca" />
        <stop offset=".5" stopColor="#a0a2a8" />
        <stop offset=".72" stopColor="#74777c" />
        <stop offset="1" stopColor="#9da0ac" />
      </linearGradient>
      <linearGradient id="drill" gradientUnits="userSpaceOnUse" x1="694" y1="0" x2="820" y2="0">
        <stop offset="0" stopColor="#9a9dab" />
        <stop offset=".25" stopColor="#b2b5c3" />
        <stop offset=".6" stopColor="#a0a2a8" />
        <stop offset="1" stopColor="#9a9daa" />
      </linearGradient>
      <linearGradient id="drillShade" gradientUnits="userSpaceOnUse" x1="694" y1="0" x2="820" y2="0">
        <stop offset="0" stopColor="#777a82" />
        <stop offset=".5" stopColor="#7c7f80" />
        <stop offset=".75" stopColor="#83868b" />
        <stop offset="1" stopColor="#a0a3b0" />
      </linearGradient>
      <linearGradient id="through" x1="0" y1="0" x2=".3" y2="1">
        <stop offset="0" stopColor="#545959" />
        <stop offset="1" stopColor="#656762" />
      </linearGradient>
      <clipPath id="plateClip"><path d="M750 166L1000 306 777 667 527 529z" /></clipPath>
      <clipPath id="innerClip"><ellipse cx="754.500" cy="376.500" rx="109" ry="104.500" /></clipPath>
      <clipPath id="floorClip"><ellipse cx="757" cy="388.500" rx="108.500" ry="104.500" /></clipPath>
      <clipPath id="holeClip"><ellipse cx="757" cy="388.500" rx="63.500" ry="61" /></clipPath>
      <filter id="soft" x="-5%" y="-5%" width="110%" height="110%"><feGaussianBlur stdDeviation="1.200" /></filter>
    </defs>

    <path d="M529 532l2 12 248 137 6 1 222-365-4-8z" fill="#c9cad0" opacity=".8" filter="url(#soft)" />
    <path
      d="M722 157L678 223 638 203C612 192 597 189.500 575 190 543 190 516 203 497 217 473 235 461 255 453 276 444 297 442 308 442 322 442 342 448 361 457 380 470 404 486 421 504 431L540 452 498 518 530 536 760 300 760 180z"
      fill="url(#ground)"
      filter="url(#soft)"
    />

    <path d="M527 529l2 9 250.500 138 1-8z" fill="#6a6e76" />
    <path d="M1000 306l2 7-222.500 363-2.500-9z" fill="#a6a9b6" />
    <path d="M750 166L1000 306 777 667 527 529z" fill="url(#plate)" />
    <path d="M710 234l90 50-130 234-102-56z" fill="#5e616d" clipPath="url(#plateClip)" />
    <g stroke={EDGE} strokeWidth="1.300" fill="none" strokeLinejoin="round">
      <path d="M750 166L1000 306 777 667 527 529z" />
      <path d="M527 529l2 8 250.500 139L1002 313l-2-7M777 667l2.500 9" />
    </g>

    <path d="M622.400 405.700L632 447 897 389 887.600 347.300z" fill="url(#side)" />
    <ellipse cx="764.500" cy="418" rx="136" ry="130" fill="url(#side)" />
    <path d="M628.500 425A136 130 0 1 0 896 385" fill="none" stroke={EDGE} strokeWidth="1.300" />

    <ellipse cx="755" cy="376.500" rx="136" ry="131" fill="#83879b" stroke={EDGE} strokeWidth="1.300" />
    <ellipse cx="754.500" cy="376.500" rx="109" ry="104.500" fill="url(#bore)" />
    <g clipPath="url(#innerClip)">
      <ellipse cx="757" cy="388.500" rx="108.500" ry="104.500" fill="#5f626e" />
      <g clipPath="url(#floorClip)">
        <circle cx="712" cy="361" r="106.500" fill="#83879b" />
      </g>
      <ellipse cx="757" cy="388.500" rx="108.500" ry="104.500" fill="none" stroke={EDGE} strokeWidth="1.300" />
    </g>
    <ellipse cx="754.500" cy="376.500" rx="109" ry="104.500" fill="none" stroke={EDGE} strokeWidth="1.300" />

    <ellipse cx="757" cy="388.500" rx="63.500" ry="61" fill="url(#drill)" />
    <g clipPath="url(#holeClip)">
      <path d="M783 335C745 345 720 368 700 410L730 460 830 430 825 385C815 365 800 340 783 335z" fill="url(#drillShade)" />
      <ellipse cx="766" cy="424" rx="63.500" ry="60" fill="url(#through)" stroke={EDGE} strokeWidth="1.300" />
    </g>
    <ellipse cx="757" cy="388.500" rx="63.500" ry="61" fill="none" stroke={EDGE} strokeWidth="1.300" />

    <path d="M495.500 575c-3 5-1 11 4.500 12.500s11.500-2 11-8.500c0-3-1.500-5-3.500-6.500" fill="none" stroke="#1f4f6c" strokeWidth="3.600" />
    <path d="M495.500 575c-3 5-1 11 4.500 12.500s11.500-2 11-8.500c0-3-1.500-5-3.500-6.500" fill="none" stroke="#7fb2cb" strokeWidth="1.600" />
    <path d="M493 571h8v7l-2.500-2-2.500 2.500-2.500-2 2-2.500z" fill="#2e7399" stroke="#123a52" strokeWidth=".8" />

    <path d="M333 622l-10 17" stroke="#2626b0" strokeWidth="3" />
    <path d="M319 636l8 4-9 7z" fill="#1c1ca4" />
    <path d="M335 622l19 10" stroke="#d02a2a" strokeWidth="3" />
    <path d="M355 627l-4 8 10 1z" fill="#b82020" />
    <ellipse cx="333" cy="617" rx="4.500" ry="5" fill="#0f5a18" />
    <path d="M330 609l3 3 3-3M333 612v2" stroke="#0f5a18" fill="none" />
    <path d="M360 633l5 9M365 633l-5 9" stroke="#d02a2a" fill="none" />
    <path d="M313 646h5l-5 8h5" stroke="#1c1ca4" fill="none" />
  </svg>
);

const chevron = (d: string) => (
  <svg width="8" height="10" viewBox="0 0 8 10" fill="none"><path d={d} stroke="#333" strokeWidth="1.400" /></svg>
);

const MenuCell = ({ w, light, label }: { w: number; light?: boolean; label: string }) => (
  <Cell $w={w} aria-label={label}><Caret $light={light} /></Cell>
);

export default function App() {
  return (
    <Desktop>
      <GlobalStyle />
      <AppWindow>
        <TitleBar>
          <Brand>
            <Logo />
            <BrandText><b>SOLID</b>WORKS</BrandText>
          </Brand>
          <Expander aria-label="Show menus">
            <svg width="7" height="12" viewBox="0 0 7 12"><path d="M0 0l7 6-7 6z" fill="#222" /></svg>
          </Expander>
          <Cell $w={26} aria-label="Home"><Icon name="home" /></Cell>
          {["page", "open", "save", "print", "undo", "cursor"].map((n) => (
            <React.Fragment key={n}>
              <Cell $w={27} aria-label={n}><Icon name={n} /></Cell>
              <MenuCell w={12} label={`${n} options`} />
            </React.Fragment>
          ))}
          <Cell $w={27} aria-label="Rebuild"><Icon name="light" size={18} /></Cell>
          <Cell $w={25} aria-label="File properties"><Icon name="list" size={18} /></Cell>
          <Cell $w={26} aria-label="Options"><Icon name="gear" size={18} /></Cell>
          <MenuCell w={12} label="Options menu" />
          <DocTitle>Part1 *</DocTitle>
          <Search>
            <svg width="15" height="15" viewBox="0 0 15 15">
              <rect x=".7" y=".7" width="13.600" height="13.600" fill="#2a2a2a" stroke="#777" />
              <path d="M3 3l4.500 4.500L3 12M8.500 11.500H12" fill="none" stroke="#fff" strokeWidth="1.500" />
            </svg>
            <input type="text" placeholder="Search Commands" aria-label="Search Commands" />
            <svg width="18" height="18" viewBox="0 0 18 18" fill="none">
              <path d="M1.500 16.500l5-5.500" stroke="#3f6f98" strokeWidth="2.500" />
              <circle cx="10.500" cy="7" r="5.500" fill="#f4f8fb" stroke="#5c86a8" strokeWidth="1.400" />
            </svg>
            <MenuCell w={12} label="Search scope" />
          </Search>
          <Cell $w={36} aria-label="Account"><Icon name="user" /></Cell>
          <Cell $w={16} aria-label="Help">?</Cell>
          <MenuCell w={18} label="Help menu" />
          {["minimize", "span", "maximize", "close"].map((n) => (
            <Cell key={n} $w={26} aria-label={n}><Icon name={n} /></Cell>
          ))}
        </TitleBar>

        <Ribbon>
          <BigTool w={62} icon="boss" label={"Extruded\nBoss/Base"} />
          <BigTool w={63} icon="revolve" label={"Revolved\nBoss/Base"} />
          <SmallTools w={142} lead={1} items={[["Swept Boss/Base", "swept"], ["Lofted Boss/Base", "lofted"], ["Boundary Boss/Base", "boundary"]]} />
          <Rule $gap={4} />
          <BigTool w={50} icon="cutExtrude" label={"Extruded\nCut"} />
          <BigTool w={52} icon="hole" label={"Hole\nWizard"} menu />
          <BigTool w={50} icon="cutRevolve" label={"Revolved\nCut"} />
          <SmallTools w={108} lead={5} items={[["Swept Cut", "cutSwept"], ["Lofted Cut", "cutLofted"], ["Boundary Cut", "cutBoundary"]]} />
          <Rule $gap={0} />
          <BigTool w={37} icon="fillet" label="Fillet" menu />
          <BigTool w={44} icon="pattern" label={"Linear\nPattern"} menu />
          <SmallTools w={64} lead={4} items={[["Rib", "rib"], ["Draft", "draft"], ["Shell", "shell"]]} />
          <SmallTools w={81} items={[["Wrap", "wrap"], ["Intersect", "intersect"], ["Mirror", "mirror"]]} />
          <Rule $gap={4} />
          <BigTool w={56} icon="refGeo" label={"Reference\nGeometry"} menu />
          <BigTool w={47} icon="curves" label="Curves" menu />
          <Rule $gap={1} />
          <BigTool w={60} icon="instant" label="Instant3D" on />
        </Ribbon>

        <Workspace>
          <TopRow>
            <CommandTab $w={64} $on>Features</CommandTab>
            <CommandTab $w={56}>Sketch</CommandTab>
            <CommandTab $w={60}>Evaluate</CommandTab>
            <CommandTab $w={66}>DimXpert</CommandTab>
            <CommandTab $w={133}>SOLIDWORKS Add-Ins</CommandTab>
            <HeadsUp>
              {["zoomFit", "zoomArea", "prevView", "section", "annView", "orient", "|", "display", "|", "eye", "|", "appearance", "scene", "|", "monitor", "|"].map((n, i) =>
                n === "|" ? (
                  <MenuCell key={i} w={14} light label="View options" />
                ) : (
                  <Cell key={i} $w={26} aria-label={n}><Icon name={n} /></Cell>
                )
              )}
            </HeadsUp>
            <DocControls>
              {["paneLeft", "paneRight", "miniMin", "miniRestore", "miniClose"].map((n) => (
                <Cell key={n} $w={26} aria-label={n}><Icon name={n} /></Cell>
              ))}
            </DocControls>
          </TopRow>

          <Body>
            <FeaturePanel>
              <Grip><Dot /></Grip>
              <PanelTabs>
                {["part", "list", "config", "target", "globe"].map((n, i) => (
                  <PanelTab key={n} $on={i === 0} aria-label={n}><Icon name={n} /></PanelTab>
                ))}
                <MoreTabs aria-label="More tabs">{chevron("M2 1l4 4-4 4")}</MoreTabs>
              </PanelTabs>
              <FilterBox>
                <Icon name="filter" />
                <input type="text" aria-label="Filter tree" />
              </FilterBox>
              <Tree>
                {tree.map((n) => (
                  <Node key={n.label} $depth={n.depth}>
                    {n.depth === 1 && (
                      <Toggle as={n.open === undefined ? "span" : "button"} aria-label={n.open === undefined ? undefined : `Toggle ${n.label}`}>
                        {n.open !== undefined && (
                          <svg width="8" height="8" viewBox="0 0 8 8">
                            <path d={n.open ? "M0 2h8L4 6z" : "M2 0l4 4-4 4z"} fill="#666" />
                          </svg>
                        )}
                      </Toggle>
                    )}
                    <Icon name={n.icon} />
                    {n.label}
                  </Node>
                ))}
              </Tree>
              <ScrollBar>
                <ScrollButton aria-label="Scroll left">{chevron("M6 1L2 5l4 4")}</ScrollButton>
                <Thumb><i /><i /><i /></Thumb>
                <ScrollButton aria-label="Scroll right">{chevron("M2 1l4 4-4 4")}</ScrollButton>
              </ScrollBar>
            </FeaturePanel>
            <Viewport>
              <Model />
              <TaskPane>
                {["home", "library", "explorer", "palette", "sphere", "list", "forum"].map((n) => (
                  <TaskTab key={n} $on={n === "sphere"} aria-label={n}><Icon name={n} /></TaskTab>
                ))}
              </TaskPane>
            </Viewport>
            <Splitter><Dot /></Splitter>
          </Body>
        </Workspace>

        <SheetBar>
          {["M3 1v8M9 1v8L4 5z", "M8 1v8L3 5z", "M3 1v8l5-4z", "M8 1v8M2 1v8l5-4z"].map((d) => (
            <SheetNav key={d} aria-label="Scroll sheets">
              <svg width="11" height="10" viewBox="0 0 11 10"><path d={d} fill="#8c8c8c" stroke="#8c8c8c" /></svg>
            </SheetNav>
          ))}
          <SheetTab $w={59} $on>Model</SheetTab>
          <SheetTab $w={68}>3D Views</SheetTab>
          <SheetTab $w={108}>Motion Study 1</SheetTab>
        </SheetBar>
        <StatusBar>
          <StatusText>SOLIDWORKS</StatusText>
          <Divider $gap={7} />
          <Divider $gap={7} />
          <Divider $gap={15} />
          <Divider $gap={0} />
          <Units>IPS<Caret $up /></Units>
          <Icon name="tag" size={18} />
          <Corner>
            <svg width="10" height="10" viewBox="0 0 10 10">
              <path d="M8 1h1v1H8zM5 4h1v1H5zM8 4h1v1H8zM2 7h1v1H2zM5 7h1v1H5zM8 7h1v1H8z" fill="#888" />
            </svg>
          </Corner>
        </StatusBar>
      </AppWindow>
    </Desktop>
  );
}
